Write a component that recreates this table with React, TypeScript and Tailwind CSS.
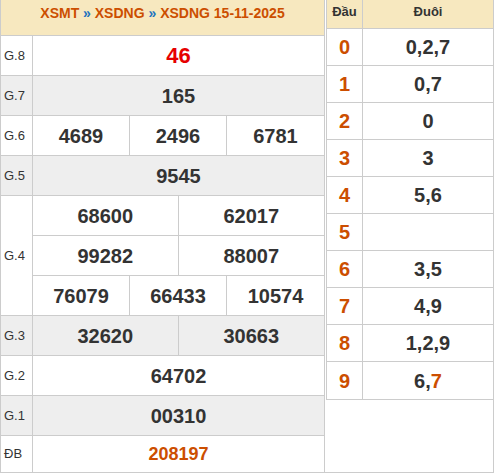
const ORANGE = "text-[#cc4e00]";

type Line = string[];

interface PrizeRow {
  label: string;
  lines: Line[];
  gray: boolean;
  numClass?: string;
}

const prizes: PrizeRow[] = [
  { label: "G.8", lines: [["46"]], gray: false, numClass: "text-[22px] text-[#e60000]" },
  { label: "G.7", lines: [["165"]], gray: true },
  { label: "G.6", lines: [["4689", "2496", "6781"]], gray: false },
  { label: "G.5", lines: [["9545"]], gray: true },
  {
    label: "G.4",
    lines: [
      ["68600", "62017"],
      ["99282", "88007"],
      ["76079", "66433", "10574"],
    ],
    gray: false,
  },
  { label: "G.3", lines: [["32620", "30663"]], gray: true },
  { label: "G.2", lines: [["64702"]], gray: false },
  { label: "G.1", lines: [["00310"]], gray: true },
];

const gridCols: Record<number, string> = {
  1: "grid-cols-1",
  2: "grid-cols-2",
  3: "grid-cols-3",
};

const loto: { head: string; tail: React.ReactNode }[] = [
  { head: "0", tail: "0,2,7" },
  { head: "1", tail: "0,7" },
  { head: "2", tail: "0" },
  { head: "3", tail: "3" },
  { head: "4", tail: "5,6" },
  { head: "5", tail: "" },
  { head: "6", tail: "3,5" },
  { head: "7", tail: "4,9" },
  { head: "8", tail: "1,2,9" },
  {
    head: "9",
    tail: (
      <>
        6,<span className={ORANGE}>7</span>
      </>
    ),
  },
];

function Prize({ row }: { row: PrizeRow }) {
  const numClass = row.numClass ?? "text-[20px] text-[#333]";
  return (
    <div className={`flex border-b border-[#ccc] ${row.gray ? "bg-[#eeeeee]" : "bg-white"}`}>
      <div className="w-[32px] shrink-0 border-r border-[#ccc] flex items-center pl-[3px] text-[13px] text-[#333]">
        {row.label}
      </div>
      <div className="flex-1 flex flex-col">
        {row.lines.map((line, i) => (
          <div
            key={i}
            className={`grid ${gridCols[line.length]} ${i < row.lines.length - 1 ? "h-[40px] border-b border-[#ccc]" : "h-[39px]"}`}
          >
            {line.map((n, j) => (
              <div
                key={n}
                className={`flex items-center justify-center font-bold ${numClass} ${j < line.length - 1 ? "border-r border-[#ccc]" : ""}`}
              >
                {n}
              </div>
            ))}
          </div>
        ))}
      </div>
    </div>
  );
}

export default function App() {
  return (
    <div className="w-[494px] h-[473px] overflow-hidden bg-white font-['Liberation_Sans',Arial,sans-serif]">
      <div className="h-[473px] flex border-b border-r border-[#ccc]">
        {/* results table */}
        <div className="w-[325px] shrink-0 flex flex-col border-l border-r border-[#ccc]">
          <div className="h-[36px] shrink-0 border-b border-[#ccc] bg-[#f7e8bf] text-center text-[14px] font-bold leading-[26px] text-[#cc4e00]">
            XSMT <span className="text-[#1e73be]">»</span> XSDNG{" "}
            <span className="text-[#1e73be]">»</span> XSDNG 15-11-2025
          </div>
          {prizes.map((row) => (
            <Prize key={row.label} row={row} />
          ))}
          <div className="flex-1 flex bg-white">
            <div className="w-[32px] shrink-0 border-r border-[#ccc] flex items-center pl-[3px] text-[13px] text-[#333]">
              ĐB
            </div>
            <div className={`flex-1 flex items-center justify-center text-[18px] font-bold ${ORANGE}`}>
              208197
            </div>
          </div>
        </div>

        {/* loto table */}
        <div className="flex-1 pl-[1px]">
          <div className="border-l border-b border-[#ccc]">
            <div className="h-[29px] flex border-b border-[#ccc] bg-[#f7e8bf] text-[13px] font-bold leading-[23px] text-[#333]">
              <div className="w-[36px] shrink-0 border-r border-[#ccc] text-center">Đầu</div>
              <div className="flex-1 text-center">Đuôi</div>
            </div>
            {loto.map((r, i) => (
              <div
                key={r.head}
                className={`h-[37px] flex text-[20px] font-bold ${i < loto.length - 1 ? "border-b border-[#ccc]" : "h-[36px]"}`}
              >
                <div className={`w-[36px] shrink-0 border-r border-[#ccc] flex items-center justify-center ${ORANGE}`}>
                  {r.head}
                </div>
                <div className="flex-1 flex items-center justify-center text-[#333]">{r.tail}</div>
              </div>
            ))}
          </div>
        </div>
      </div>
    </div>
  );
}
